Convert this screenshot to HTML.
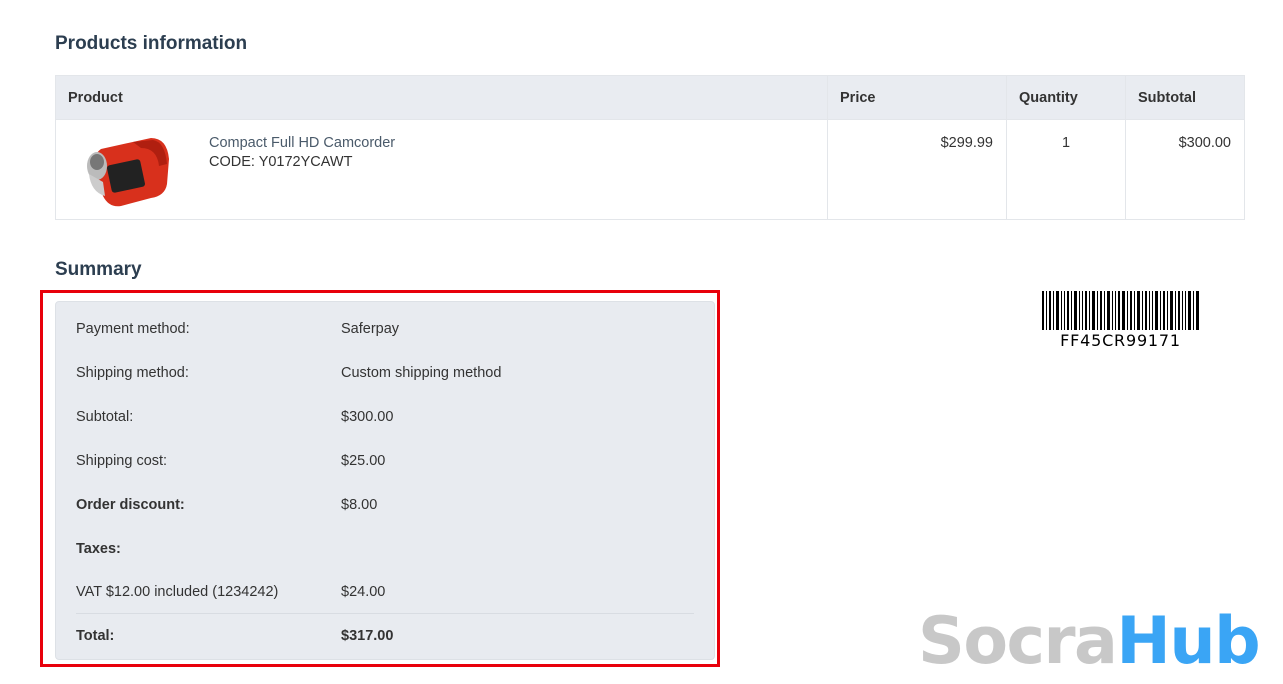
<!DOCTYPE html>
<html><head><meta charset="utf-8"><style>
body{margin:0;width:1283px;height:681px;background:#fff;font-family:"Liberation Sans",sans-serif;color:#333;position:relative;overflow:hidden}
.abs{position:absolute}
h2{position:absolute;margin:0;font-size:19px;font-weight:bold;color:#2c3e50}
table{position:absolute;left:55px;top:75px;width:1190px;border-collapse:collapse;font-size:14.5px}
td,th{border:1px solid #e3e6ea;text-align:left;vertical-align:top}
th{background:#e9ecf1;height:43px;vertical-align:middle;padding:0 12px;color:#333}
td{height:68px;padding:15px 13px 16px}
.red{left:40px;top:290px;width:674px;height:371px;border:3px solid #e8000b}
.box{left:55px;top:301px;width:660px;height:359px;background:#e8ebf0;border-radius:4px;border:1px solid #dde1e6;box-sizing:border-box}
.row{position:absolute;left:76px;font-size:14.5px;color:#333}
.v{position:absolute;left:341px;font-size:14.5px;color:#333}
</style></head><body>
<h2 style="left:55px;top:33px">Products information</h2>
<table>
<tr><th style="width:747px">Product</th><th style="width:154px">Price</th><th style="width:94px">Quantity</th><th>Subtotal</th></tr>
<tr><td style="position:relative">
<svg class="abs" style="left:25px;top:14px" width="92" height="76" viewBox="0 0 92 76">
<path d="M20 15 L70 4 Q86 4 88 25 L86 50 Q84 62 70 64 L40 72 Q28 74 22 62 L14 40 Q10 22 20 15Z" fill="#d8301c"/>
<path d="M52 8 L72 6 Q84 8 86 30 L78 32 Q76 14 60 14Z" fill="#b01f10"/>
<rect x="28" y="28" width="34" height="28" rx="3" fill="#222" transform="rotate(-12 45 42)"/>
<ellipse cx="16" cy="32" rx="10" ry="14" fill="#bbb"/>
<ellipse cx="16" cy="28" rx="7" ry="8" fill="#777"/>
<path d="M8 40 Q10 58 24 62 L22 48Z" fill="#ccc"/>
</svg>
<div class="abs" style="left:153px;top:15px;color:#4a5a6a">Compact Full HD Camcorder</div>
<div class="abs" style="left:153px;top:34px;color:#333">CODE: Y0172YCAWT</div>
</td><td style="text-align:right">$299.99</td><td style="text-align:center">1</td><td style="text-align:right">$300.00</td></tr>
</table>
<h2 style="left:55px;top:259px">Summary</h2>
<div class="abs box"></div>
<div class="abs red"></div>
<div class="row" style="top:321px">Payment method:</div><div class="v" style="top:321px">Saferpay</div>
<div class="row" style="top:365px">Shipping method:</div><div class="v" style="top:365px">Custom shipping method</div>
<div class="row" style="top:409px">Subtotal:</div><div class="v" style="top:409px">$300.00</div>
<div class="row" style="top:453px">Shipping cost:</div><div class="v" style="top:453px">$25.00</div>
<div class="row" style="top:497px;font-weight:bold">Order discount:</div><div class="v" style="top:497px">$8.00</div>
<div class="row" style="top:541px;font-weight:bold">Taxes:</div>
<div class="row" style="top:584px">VAT $12.00 included (1234242)</div><div class="v" style="top:584px">$24.00</div>
<div class="abs" style="left:76px;top:613px;width:618px;height:1px;background:#d8dce2"></div>
<div class="row" style="top:628px;font-weight:bold">Total:</div><div class="v" style="top:628px;font-weight:bold">$317.00</div>
<svg class="abs" style="left:1042px;top:291px" width="157" height="39">
<g fill="#000">
<rect x="0" width="2" height="39"/><rect x="4" width="1" height="39"/><rect x="7" width="2" height="39"/><rect x="11" width="1" height="39"/><rect x="14" width="3" height="39"/><rect x="19" width="1" height="39"/><rect x="22" width="1" height="39"/><rect x="25" width="2" height="39"/><rect x="29" width="1" height="39"/><rect x="32" width="3" height="39"/><rect x="37" width="1" height="39"/><rect x="40" width="1" height="39"/><rect x="43" width="2" height="39"/><rect x="47" width="1" height="39"/><rect x="50" width="3" height="39"/><rect x="55" width="1" height="39"/><rect x="58" width="2" height="39"/><rect x="62" width="1" height="39"/><rect x="65" width="3" height="39"/><rect x="70" width="1" height="39"/><rect x="73" width="1" height="39"/><rect x="76" width="2" height="39"/><rect x="80" width="3" height="39"/><rect x="85" width="1" height="39"/><rect x="88" width="2" height="39"/><rect x="92" width="1" height="39"/><rect x="95" width="3" height="39"/><rect x="100" width="1" height="39"/><rect x="103" width="2" height="39"/><rect x="107" width="1" height="39"/><rect x="110" width="1" height="39"/><rect x="113" width="3" height="39"/><rect x="118" width="1" height="39"/><rect x="121" width="2" height="39"/><rect x="125" width="1" height="39"/><rect x="128" width="3" height="39"/><rect x="133" width="1" height="39"/><rect x="136" width="2" height="39"/><rect x="140" width="1" height="39"/><rect x="143" width="1" height="39"/><rect x="146" width="3" height="39"/><rect x="151" width="1" height="39"/><rect x="154" width="3" height="39"/>
</g></svg>
<div class="abs" style="left:1042px;top:331px;width:157px;text-align:center;font-family:'DejaVu Sans',sans-serif;font-size:16px;color:#000;letter-spacing:0.8px">FF45CR99171</div>
<div class="abs" style="left:918px;top:600px;font-family:'DejaVu Sans',sans-serif;font-weight:bold;font-size:65px;letter-spacing:-1.5px;line-height:84px"><span style="color:#c8c8c8">Socra</span><span style="color:#3aa5f5">Hub</span></div>
</body></html>
